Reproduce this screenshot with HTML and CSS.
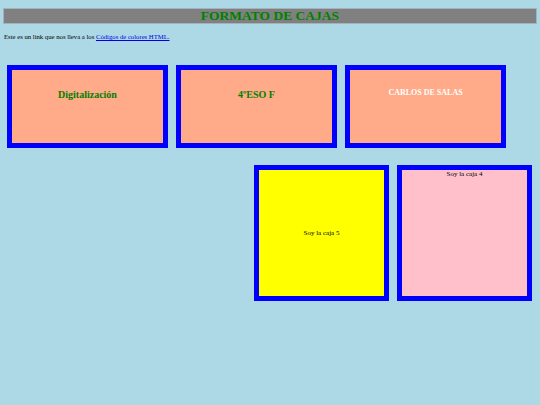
FILE: index.html
```html
<!DOCTYPE html>
<html lang="es">
<head>
<meta charset="utf-8">
<title>Formato de cajas</title>
<link rel="stylesheet" href="styles.css">
</head>
<body>
<div class="page">
  <h1 class="title">FORMATO DE CAJAS</h1>
  <p class="intro">Este es un link que nos lleva a los <a class="link" href="#">Códigos de colores HTML.</a></p>
  <div class="row row-top">
    <div class="box box-salmon"><h2 class="box-title">Digitalización</h2></div>
    <div class="box box-salmon"><h2 class="box-title">4ºESO F</h2></div>
    <div class="box box-salmon"><h3 class="box-name">CARLOS DE SALAS</h3></div>
  </div>
  <div class="row row-bottom">
    <div class="box box-square box-yellow"><span class="small">Soy la caja 5</span></div>
    <div class="box box-square box-pink"><span class="small small-top">Soy la caja 4</span></div>
  </div>
</div>
</body>
</html>
```
FILE: styles.css
```css
html, body {
  margin: 0;
  padding: 0;
  background: #add8e6;
  font-family: "Liberation Serif", "Times New Roman", serif;
  color: #000;
}
.page {
  display: flex;
  flex-direction: column;
  width: 540px;
  height: 405px;
}
.title {
  box-sizing: border-box;
  margin: 8px 3px 0;
  height: 16px;
  background: #808080;
  border: 1px solid #a3b3bb;
  color: #008000;
  font-size: 13.5px;
  line-height: 14px;
  font-weight: bold;
  text-align: center;
}
.intro {
  margin: 9px 0 0 4px;
  font-size: 6.7px;
  line-height: 8px;
}
.link {
  color: #0000ee;
  text-decoration: underline;
}
.row {
  display: flex;
  gap: 8px;
}
.row-top {
  margin-top: 24px;
  padding-left: 7px;
}
.row-bottom {
  margin-top: 17px;
  justify-content: flex-end;
  padding-right: 8px;
}
.box {
  box-sizing: border-box;
  border: 5px solid #0000ff;
  width: 161px;
  height: 83px;
  text-align: center;
}
.box-salmon {
  background: #ffaa88;
}
.box-title {
  margin: 0;
  padding-top: 19px;
  font-size: 10px;
  line-height: 12px;
  font-weight: bold;
  color: #008000;
}
.box-name {
  margin: 0;
  padding-top: 18px;
  font-size: 8px;
  line-height: 10px;
  font-weight: bold;
  color: #ffffff;
}
.box-square {
  width: 135px;
  height: 136px;
  display: flex;
  justify-content: center;
  align-items: center;
}
.box-yellow {
  background: #ffff00;
}
.box-pink {
  background: #ffc0cb;
  align-items: flex-start;
}
.small {
  font-size: 7px;
  line-height: 8px;
}
.small-top {
  padding-top: 0;
}
```
